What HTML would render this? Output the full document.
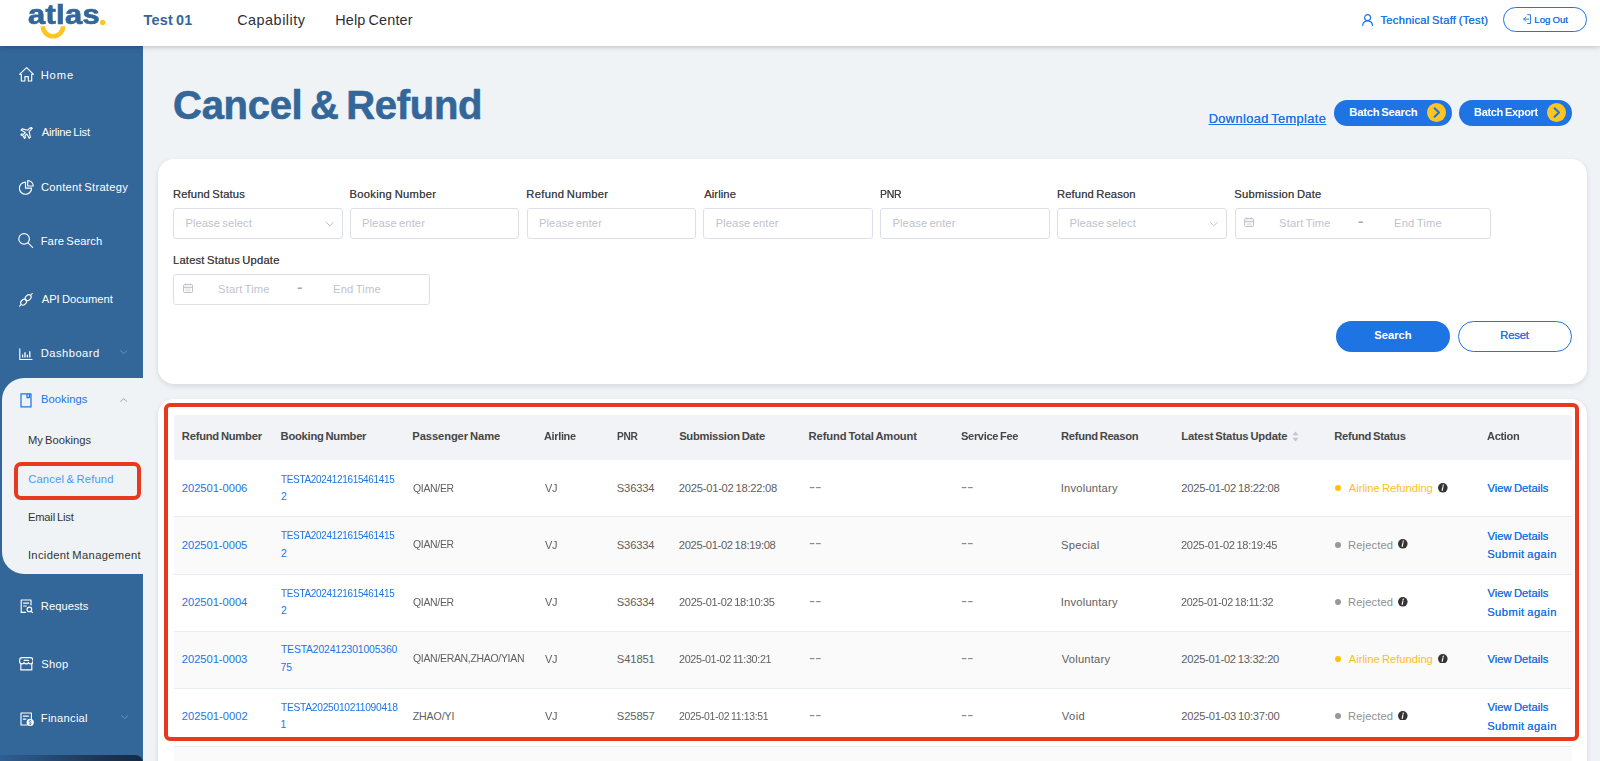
<!DOCTYPE html><html lang="en"><head><meta charset="utf-8"><title>Cancel &amp; Refund</title><style>
*{box-sizing:border-box;margin:0;padding:0}
html,body{width:1600px;height:761px;overflow:hidden;background:#eff3f6;font-family:"Liberation Sans", sans-serif;}
body{position:relative}
.t{position:absolute;white-space:nowrap;display:block;transform-origin:0 50%;word-spacing:-.08em}
a{text-decoration:none}
header,nav,main,section,aside{position:absolute;left:0;top:0}
.inp{position:absolute;background:#fff;border:1px solid #dcdfe8;border-radius:3px}
</style></head><body>
<main>
<h1 class="t" style="left:173.07px;top:76.64px;font-size:40.00px;line-height:56px;color:#336699;font-weight:700;letter-spacing:-0.300px;-webkit-text-stroke:.6px #336699;">Cancel &amp; Refund</h1>
<a class="t" style="left:1208.75px;top:109.56px;font-size:12.80px;line-height:18px;color:#1f74e3;letter-spacing:0.370px;text-decoration:underline;text-underline-offset:1px;text-shadow:0 0 .25px #1f74e3;">Download Template</a>
<div style="position:absolute;left:1333.75px;top:99.75px;width:118.00px;height:26.00px;background:#1f74e3;border-radius:13px;"></div><span class="t" style="left:1349.33px;top:104.37px;font-size:11.20px;line-height:16px;color:#fff;font-weight:700;letter-spacing:-0.212px;">Batch Search</span><svg style="position:absolute;left:1426.90px;top:103.40px;" width="19" height="19" viewBox="0 0 19 19" fill="none"><circle cx="9.5" cy="9.5" r="9.5" fill="#fdc521"/><path d="M7.6 5.2 L12 9.5 L7.6 13.8" stroke="#1f74e3" stroke-width="2" stroke-linecap="round" stroke-linejoin="round"/></svg>
<div style="position:absolute;left:1459.25px;top:99.75px;width:112.75px;height:26.00px;background:#1f74e3;border-radius:13px;"></div><span class="t" style="left:1473.83px;top:104.37px;font-size:11.20px;line-height:16px;color:#fff;font-weight:700;letter-spacing:-0.336px;transform:scaleX(0.9875);">Batch Export</span><svg style="position:absolute;left:1547.00px;top:103.40px;" width="19" height="19" viewBox="0 0 19 19" fill="none"><circle cx="9.5" cy="9.5" r="9.5" fill="#fdc521"/><path d="M7.6 5.2 L12 9.5 L7.6 13.8" stroke="#1f74e3" stroke-width="2" stroke-linecap="round" stroke-linejoin="round"/></svg>
<section>
<div style="position:absolute;left:158.00px;top:159.00px;width:1429.00px;height:224.50px;background:#fff;border-radius:16px;box-shadow:0 2px 5px rgba(40,50,70,.13);"></div>
<label class="t" style="left:173.00px;top:186.02px;font-size:11.20px;line-height:16px;color:#333;letter-spacing:0.144px;color:#404040;text-shadow:0 0 .2px #666;">Refund Status</label>
<label class="t" style="left:349.40px;top:186.02px;font-size:11.20px;line-height:16px;color:#333;letter-spacing:0.328px;color:#404040;text-shadow:0 0 .2px #666;">Booking Number</label>
<label class="t" style="left:526.30px;top:186.02px;font-size:11.20px;line-height:16px;color:#333;letter-spacing:0.308px;color:#404040;text-shadow:0 0 .2px #666;">Refund Number</label>
<label class="t" style="left:704.20px;top:186.02px;font-size:11.20px;line-height:16px;color:#333;letter-spacing:0.106px;color:#404040;text-shadow:0 0 .2px #666;">Airline</label>
<label class="t" style="left:880.33px;top:186.02px;font-size:11.20px;line-height:16px;color:#333;letter-spacing:-0.336px;transform:scaleX(0.9377);color:#404040;text-shadow:0 0 .2px #666;">PNR</label>
<label class="t" style="left:1057.00px;top:186.02px;font-size:11.20px;line-height:16px;color:#333;letter-spacing:0.139px;color:#404040;text-shadow:0 0 .2px #666;">Refund Reason</label>
<label class="t" style="left:1234.33px;top:186.02px;font-size:11.20px;line-height:16px;color:#333;letter-spacing:0.238px;color:#404040;text-shadow:0 0 .2px #666;">Submission Date</label>
<label class="t" style="left:173.00px;top:252.12px;font-size:11.20px;line-height:16px;color:#333;letter-spacing:0.193px;color:#404040;text-shadow:0 0 .2px #666;">Latest Status Update</label>
<div class="inp" style="left:173.00px;top:208.20px;width:169.60px;height:30.5px"></div><span class="t" style="left:185.40px;top:215.22px;font-size:11.20px;line-height:16px;color:#bfc3cc;letter-spacing:0.069px;">Please select</span><svg style="position:absolute;left:325.10px;top:221.20px;" width="9.6" height="6.2" viewBox="0 0 9.6 6.2" fill="none"><path d="M1.2 1.3 L4.8 4.8 L8.4 1.3" stroke="#bcc0c9" stroke-width="1" stroke-linecap="round" stroke-linejoin="round"/></svg>
<div class="inp" style="left:349.50px;top:208.20px;width:169.60px;height:30.5px"></div><span class="t" style="left:362.00px;top:215.22px;font-size:11.20px;line-height:16px;color:#bfc3cc;letter-spacing:0.085px;">Please enter</span>
<div class="inp" style="left:526.50px;top:208.20px;width:169.60px;height:30.5px"></div><span class="t" style="left:539.00px;top:215.22px;font-size:11.20px;line-height:16px;color:#bfc3cc;letter-spacing:0.085px;">Please enter</span>
<div class="inp" style="left:703.20px;top:208.20px;width:169.60px;height:30.5px"></div><span class="t" style="left:715.70px;top:215.22px;font-size:11.20px;line-height:16px;color:#bfc3cc;letter-spacing:0.085px;">Please enter</span>
<div class="inp" style="left:880.00px;top:208.20px;width:169.60px;height:30.5px"></div><span class="t" style="left:892.50px;top:215.22px;font-size:11.20px;line-height:16px;color:#bfc3cc;letter-spacing:0.085px;">Please enter</span>
<div class="inp" style="left:1057.00px;top:208.20px;width:169.60px;height:30.5px"></div><span class="t" style="left:1069.40px;top:215.22px;font-size:11.20px;line-height:16px;color:#bfc3cc;letter-spacing:0.069px;">Please select</span><svg style="position:absolute;left:1209.10px;top:221.20px;" width="9.6" height="6.2" viewBox="0 0 9.6 6.2" fill="none"><path d="M1.2 1.3 L4.8 4.8 L8.4 1.3" stroke="#bcc0c9" stroke-width="1" stroke-linecap="round" stroke-linejoin="round"/></svg>
<div class="inp" style="left:1235.00px;top:208.20px;width:255.80px;height:30.5px"></div><svg style="position:absolute;left:1243.50px;top:216.80px;" width="10.2" height="10.2" viewBox="0 0 10.2 10.2" fill="none"><rect x="0.6" y="1.6" width="9" height="8" rx="1" stroke="#b9bdc7" stroke-width="1"/><path d="M0.6 4.3 H9.6 M2.8 0.4 V2.4 M7.4 0.4 V2.4" stroke="#b9bdc7" stroke-width="1"/><path d="M2.3 6 H7.9 M2.3 7.8 H7.9" stroke="#d5d8df" stroke-width=".9"/></svg><span class="t" style="left:1279.03px;top:214.82px;font-size:11.20px;line-height:16px;color:#bfc3cc;letter-spacing:0.156px;">Start Time</span><span class="t" style="left:1357.63px;top:213.00px;font-size:13.00px;line-height:18px;color:#a4a7b0;font-weight:700;letter-spacing:1.033px;transform:scaleX(1.2818);">-</span><span class="t" style="left:1394.10px;top:214.82px;font-size:11.20px;line-height:16px;color:#bfc3cc;letter-spacing:0.171px;">End Time</span>
<div class="inp" style="left:173.00px;top:274.20px;width:256.80px;height:30.5px"></div><svg style="position:absolute;left:182.50px;top:282.80px;" width="10.2" height="10.2" viewBox="0 0 10.2 10.2" fill="none"><rect x="0.6" y="1.6" width="9" height="8" rx="1" stroke="#b9bdc7" stroke-width="1"/><path d="M0.6 4.3 H9.6 M2.8 0.4 V2.4 M7.4 0.4 V2.4" stroke="#b9bdc7" stroke-width="1"/><path d="M2.3 6 H7.9 M2.3 7.8 H7.9" stroke="#d5d8df" stroke-width=".9"/></svg><span class="t" style="left:218.03px;top:280.82px;font-size:11.20px;line-height:16px;color:#bfc3cc;letter-spacing:0.156px;">Start Time</span><span class="t" style="left:296.63px;top:279.00px;font-size:13.00px;line-height:18px;color:#a4a7b0;font-weight:700;letter-spacing:1.033px;transform:scaleX(1.2818);">-</span><span class="t" style="left:333.10px;top:280.82px;font-size:11.20px;line-height:16px;color:#bfc3cc;letter-spacing:0.171px;">End Time</span>
<div style="position:absolute;left:1335.50px;top:321.00px;width:114.50px;height:30.50px;background:#1f74e3;border-radius:16px;"></div>
<span class="t" style="left:1374.17px;top:326.82px;font-size:11.20px;line-height:16px;color:#fff;font-weight:700;letter-spacing:0.033px;">Search</span>
<div style="position:absolute;left:1457.50px;top:321.00px;width:114.50px;height:30.50px;background:#fff;border:1px solid #1f74e3;border-radius:16px;"></div>
<span class="t" style="left:1500.33px;top:326.82px;font-size:11.20px;line-height:16px;color:#1f74e3;letter-spacing:-0.167px;text-shadow:0 0 .4px #1f74e3;">Reset</span>
</section>
<section>
<div style="position:absolute;left:158.00px;top:399.00px;width:1429.00px;height:380.00px;background:#fff;border-radius:16px;box-shadow:0 2px 5px rgba(40,50,70,.13);"></div>
<div style="position:absolute;left:174.00px;top:414.50px;width:1398.00px;height:45.20px;background:#f1f3f7;border-radius:3px 3px 0 0;"></div>
<span class="t" style="left:181.83px;top:428.02px;font-size:11.20px;line-height:16px;color:#464646;font-weight:700;letter-spacing:-0.236px;">Refund Number</span>
<span class="t" style="left:280.58px;top:428.02px;font-size:11.20px;line-height:16px;color:#464646;font-weight:700;letter-spacing:-0.256px;">Booking Number</span>
<span class="t" style="left:412.33px;top:428.02px;font-size:11.20px;line-height:16px;color:#464646;font-weight:700;letter-spacing:-0.103px;">Passenger Name</span>
<span class="t" style="left:544.17px;top:428.02px;font-size:11.20px;line-height:16px;color:#464646;font-weight:700;letter-spacing:-0.336px;transform:scaleX(0.9771);">Airline</span>
<span class="t" style="left:616.83px;top:428.02px;font-size:11.20px;line-height:16px;color:#464646;font-weight:700;letter-spacing:-0.336px;transform:scaleX(0.9093);">PNR</span>
<span class="t" style="left:679.17px;top:428.02px;font-size:11.20px;line-height:16px;color:#464646;font-weight:700;letter-spacing:-0.274px;">Submission Date</span>
<span class="t" style="left:808.58px;top:428.02px;font-size:11.20px;line-height:16px;color:#464646;font-weight:700;letter-spacing:-0.125px;">Refund Total Amount</span>
<span class="t" style="left:960.92px;top:428.02px;font-size:11.20px;line-height:16px;color:#464646;font-weight:700;letter-spacing:-0.336px;transform:scaleX(0.9903);">Service Fee</span>
<span class="t" style="left:1061.08px;top:428.02px;font-size:11.20px;line-height:16px;color:#464646;font-weight:700;letter-spacing:-0.312px;">Refund Reason</span>
<span class="t" style="left:1181.33px;top:428.02px;font-size:11.20px;line-height:16px;color:#464646;font-weight:700;letter-spacing:-0.175px;">Latest Status Update</span>
<span class="t" style="left:1334.33px;top:428.02px;font-size:11.20px;line-height:16px;color:#464646;font-weight:700;letter-spacing:-0.283px;">Refund Status</span>
<span class="t" style="left:1487.17px;top:428.02px;font-size:11.20px;line-height:16px;color:#464646;font-weight:700;letter-spacing:-0.336px;transform:scaleX(0.9870);">Action</span>
<svg style="position:absolute;left:1292.30px;top:431.00px;" width="7" height="11" viewBox="0 0 7 11" fill="none"><path d="M3.500 0.400 L6.600 4.300 H0.400 Z M3.500 10.600 L6.600 6.700 H0.400 Z" fill="#c2c5cf"/></svg>
<div style="position:absolute;left:174.00px;top:459.50px;width:1398.00px;height:57.70px;background:#fff;"></div>
<a class="t" style="left:181.83px;top:480.12px;font-size:11.20px;line-height:16px;color:#1f74e3;letter-spacing:-0.050px;">202501-0006</a>
<a class="t" style="left:280.92px;top:471.85px;font-size:10.40px;line-height:15px;color:#1f74e3;letter-spacing:-0.312px;transform:scaleX(0.9569);">TESTA2024121615461415</a>
<a class="t" style="left:280.92px;top:489.45px;font-size:10.40px;line-height:15px;color:#1f74e3;">2</a>
<span class="t" style="left:412.67px;top:480.83px;font-size:10.60px;line-height:15px;color:#606060;letter-spacing:-0.318px;transform:scaleX(0.9875);">QIAN/ER</span>
<span class="t" style="left:544.50px;top:480.12px;font-size:11.20px;line-height:16px;color:#606060;letter-spacing:-0.336px;transform:scaleX(0.9794);">VJ</span>
<span class="t" style="left:616.83px;top:480.12px;font-size:11.20px;line-height:16px;color:#606060;letter-spacing:-0.183px;">S36334</span>
<span class="t" style="left:678.83px;top:480.12px;font-size:11.20px;line-height:16px;color:#606060;letter-spacing:-0.250px;">2025-01-02 18:22:08</span>
<span class="t" style="left:808.58px;top:477.05px;font-size:14.00px;line-height:20px;color:#8c8c8c;transform:scaleX(1.3438);">--</span>
<span class="t" style="left:960.58px;top:477.05px;font-size:14.00px;line-height:20px;color:#8c8c8c;transform:scaleX(1.3438);">--</span>
<span class="t" style="left:1060.75px;top:480.12px;font-size:11.20px;line-height:16px;color:#606060;letter-spacing:0.208px;">Involuntary</span>
<span class="t" style="left:1181.33px;top:480.12px;font-size:11.20px;line-height:16px;color:#606060;letter-spacing:-0.250px;">2025-01-02 18:22:08</span>
<div style="position:absolute;left:1335.00px;top:485.15px;width:5.80px;height:5.80px;background:#ffc107;border-radius:50%;"></div>
<span class="t" style="left:1348.75px;top:480.12px;font-size:11.20px;line-height:16px;color:#fbbf24;letter-spacing:-0.014px;">Airline Refunding</span>
<svg style="position:absolute;left:1438.20px;top:482.95px;" width="9.6" height="9.6" viewBox="0 0 9.6 9.6" fill="none"><circle cx="4.8" cy="4.8" r="4.8" fill="#343434"/><path d="M5.3 2 L5.1 2.9 M4.9 4 L4.2 7.4" stroke="#fff" stroke-width="1.15" stroke-linecap="round"/></svg>
<a class="t" style="left:1487.50px;top:480.12px;font-size:11.20px;line-height:16px;color:#1f74e3;letter-spacing:0.045px;text-shadow:0 0 .25px #1f74e3;">View Details</a>
<div style="position:absolute;left:174.00px;top:516.20px;width:1398.00px;height:58.80px;background:#fafafa;border-top:1px solid #e8ecf3;"></div>
<a class="t" style="left:181.83px;top:536.52px;font-size:11.20px;line-height:16px;color:#1f74e3;letter-spacing:-0.050px;">202501-0005</a>
<a class="t" style="left:280.92px;top:528.25px;font-size:10.40px;line-height:15px;color:#1f74e3;letter-spacing:-0.312px;transform:scaleX(0.9569);">TESTA2024121615461415</a>
<a class="t" style="left:280.92px;top:545.85px;font-size:10.40px;line-height:15px;color:#1f74e3;">2</a>
<span class="t" style="left:412.67px;top:537.23px;font-size:10.60px;line-height:15px;color:#606060;letter-spacing:-0.318px;transform:scaleX(0.9875);">QIAN/ER</span>
<span class="t" style="left:544.50px;top:536.52px;font-size:11.20px;line-height:16px;color:#606060;letter-spacing:-0.336px;transform:scaleX(0.9794);">VJ</span>
<span class="t" style="left:616.83px;top:536.52px;font-size:11.20px;line-height:16px;color:#606060;letter-spacing:-0.183px;">S36334</span>
<span class="t" style="left:678.83px;top:536.52px;font-size:11.20px;line-height:16px;color:#606060;letter-spacing:-0.333px;">2025-01-02 18:19:08</span>
<span class="t" style="left:808.58px;top:533.45px;font-size:14.00px;line-height:20px;color:#8c8c8c;transform:scaleX(1.3438);">--</span>
<span class="t" style="left:960.58px;top:533.45px;font-size:14.00px;line-height:20px;color:#8c8c8c;transform:scaleX(1.3438);">--</span>
<span class="t" style="left:1061.08px;top:536.52px;font-size:11.20px;line-height:16px;color:#606060;letter-spacing:0.236px;">Special</span>
<span class="t" style="left:1181.33px;top:536.52px;font-size:11.20px;line-height:16px;color:#606060;letter-spacing:-0.336px;transform:scaleX(0.9953);">2025-01-02 18:19:45</span>
<div style="position:absolute;left:1335.00px;top:541.55px;width:6.00px;height:6.00px;background:#989898;border-radius:50%;"></div>
<span class="t" style="left:1348.00px;top:536.52px;font-size:11.20px;line-height:16px;color:#8f8f8f;letter-spacing:0.124px;">Rejected</span>
<svg style="position:absolute;left:1398.00px;top:539.35px;" width="9.6" height="9.6" viewBox="0 0 9.6 9.6" fill="none"><circle cx="4.8" cy="4.8" r="4.8" fill="#343434"/><path d="M5.3 2 L5.1 2.9 M4.9 4 L4.2 7.4" stroke="#fff" stroke-width="1.15" stroke-linecap="round"/></svg>
<a class="t" style="left:1487.50px;top:527.72px;font-size:11.20px;line-height:16px;color:#1f74e3;letter-spacing:0.045px;text-shadow:0 0 .25px #1f74e3;">View Details</a>
<a class="t" style="left:1487.17px;top:546.12px;font-size:11.20px;line-height:16px;color:#1f74e3;letter-spacing:0.442px;text-shadow:0 0 .25px #1f74e3;">Submit again</a>
<div style="position:absolute;left:174.00px;top:574.00px;width:1398.00px;height:58.00px;background:#fff;border-top:1px solid #e8ecf3;"></div>
<a class="t" style="left:181.83px;top:594.12px;font-size:11.20px;line-height:16px;color:#1f74e3;letter-spacing:-0.050px;">202501-0004</a>
<a class="t" style="left:280.92px;top:585.85px;font-size:10.40px;line-height:15px;color:#1f74e3;letter-spacing:-0.312px;transform:scaleX(0.9569);">TESTA2024121615461415</a>
<a class="t" style="left:280.92px;top:603.45px;font-size:10.40px;line-height:15px;color:#1f74e3;">2</a>
<span class="t" style="left:412.67px;top:594.83px;font-size:10.60px;line-height:15px;color:#606060;letter-spacing:-0.318px;transform:scaleX(0.9875);">QIAN/ER</span>
<span class="t" style="left:544.50px;top:594.12px;font-size:11.20px;line-height:16px;color:#606060;letter-spacing:-0.336px;transform:scaleX(0.9794);">VJ</span>
<span class="t" style="left:616.83px;top:594.12px;font-size:11.20px;line-height:16px;color:#606060;letter-spacing:-0.183px;">S36334</span>
<span class="t" style="left:678.83px;top:594.12px;font-size:11.20px;line-height:16px;color:#606060;letter-spacing:-0.336px;transform:scaleX(0.9901);">2025-01-02 18:10:35</span>
<span class="t" style="left:808.58px;top:591.05px;font-size:14.00px;line-height:20px;color:#8c8c8c;transform:scaleX(1.3438);">--</span>
<span class="t" style="left:960.58px;top:591.05px;font-size:14.00px;line-height:20px;color:#8c8c8c;transform:scaleX(1.3438);">--</span>
<span class="t" style="left:1060.75px;top:594.12px;font-size:11.20px;line-height:16px;color:#606060;letter-spacing:0.208px;">Involuntary</span>
<span class="t" style="left:1181.33px;top:594.12px;font-size:11.20px;line-height:16px;color:#606060;letter-spacing:-0.336px;transform:scaleX(0.9636);">2025-01-02 18:11:32</span>
<div style="position:absolute;left:1335.00px;top:599.15px;width:6.00px;height:6.00px;background:#989898;border-radius:50%;"></div>
<span class="t" style="left:1348.00px;top:594.12px;font-size:11.20px;line-height:16px;color:#8f8f8f;letter-spacing:0.124px;">Rejected</span>
<svg style="position:absolute;left:1398.00px;top:596.95px;" width="9.6" height="9.6" viewBox="0 0 9.6 9.6" fill="none"><circle cx="4.8" cy="4.8" r="4.8" fill="#343434"/><path d="M5.3 2 L5.1 2.9 M4.9 4 L4.2 7.4" stroke="#fff" stroke-width="1.15" stroke-linecap="round"/></svg>
<a class="t" style="left:1487.50px;top:585.32px;font-size:11.20px;line-height:16px;color:#1f74e3;letter-spacing:0.045px;text-shadow:0 0 .25px #1f74e3;">View Details</a>
<a class="t" style="left:1487.17px;top:603.72px;font-size:11.20px;line-height:16px;color:#1f74e3;letter-spacing:0.442px;text-shadow:0 0 .25px #1f74e3;">Submit again</a>
<div style="position:absolute;left:174.00px;top:631.00px;width:1398.00px;height:58.30px;background:#fafafa;border-top:1px solid #e8ecf3;"></div>
<a class="t" style="left:181.83px;top:650.72px;font-size:11.20px;line-height:16px;color:#1f74e3;letter-spacing:-0.050px;">202501-0003</a>
<a class="t" style="left:280.92px;top:642.45px;font-size:10.40px;line-height:15px;color:#1f74e3;letter-spacing:-0.154px;">TESTA202412301005360</a>
<a class="t" style="left:280.58px;top:660.05px;font-size:10.40px;line-height:15px;color:#1f74e3;">75</a>
<span class="t" style="left:412.67px;top:651.43px;font-size:10.60px;line-height:15px;color:#606060;letter-spacing:-0.318px;transform:scaleX(0.9901);">QIAN/ERAN,ZHAO/YIAN</span>
<span class="t" style="left:544.50px;top:650.72px;font-size:11.20px;line-height:16px;color:#606060;letter-spacing:-0.336px;transform:scaleX(0.9794);">VJ</span>
<span class="t" style="left:616.83px;top:650.72px;font-size:11.20px;line-height:16px;color:#606060;letter-spacing:-0.117px;">S41851</span>
<span class="t" style="left:678.83px;top:650.72px;font-size:11.20px;line-height:16px;color:#606060;letter-spacing:-0.336px;transform:scaleX(0.9636);">2025-01-02 11:30:21</span>
<span class="t" style="left:808.58px;top:647.65px;font-size:14.00px;line-height:20px;color:#8c8c8c;transform:scaleX(1.3438);">--</span>
<span class="t" style="left:960.58px;top:647.65px;font-size:14.00px;line-height:20px;color:#8c8c8c;transform:scaleX(1.3438);">--</span>
<span class="t" style="left:1061.75px;top:650.72px;font-size:11.20px;line-height:16px;color:#606060;letter-spacing:0.198px;">Voluntary</span>
<span class="t" style="left:1181.33px;top:650.72px;font-size:11.20px;line-height:16px;color:#606060;letter-spacing:-0.278px;">2025-01-02 13:32:20</span>
<div style="position:absolute;left:1335.00px;top:655.75px;width:5.80px;height:5.80px;background:#ffc107;border-radius:50%;"></div>
<span class="t" style="left:1348.75px;top:650.72px;font-size:11.20px;line-height:16px;color:#fbbf24;letter-spacing:-0.014px;">Airline Refunding</span>
<svg style="position:absolute;left:1438.20px;top:653.55px;" width="9.6" height="9.6" viewBox="0 0 9.6 9.6" fill="none"><circle cx="4.8" cy="4.8" r="4.8" fill="#343434"/><path d="M5.3 2 L5.1 2.9 M4.9 4 L4.2 7.4" stroke="#fff" stroke-width="1.15" stroke-linecap="round"/></svg>
<a class="t" style="left:1487.50px;top:650.72px;font-size:11.20px;line-height:16px;color:#1f74e3;letter-spacing:0.045px;text-shadow:0 0 .25px #1f74e3;">View Details</a>
<div style="position:absolute;left:174.00px;top:688.30px;width:1398.00px;height:58.70px;background:#fff;border-top:1px solid #e8ecf3;"></div>
<a class="t" style="left:181.83px;top:707.92px;font-size:11.20px;line-height:16px;color:#1f74e3;letter-spacing:-0.017px;">202501-0002</a>
<a class="t" style="left:280.92px;top:699.65px;font-size:10.40px;line-height:15px;color:#1f74e3;letter-spacing:-0.312px;transform:scaleX(0.9900);">TESTA2025010211090418</a>
<a class="t" style="left:280.58px;top:717.25px;font-size:10.40px;line-height:15px;color:#1f74e3;">1</a>
<span class="t" style="left:412.67px;top:708.63px;font-size:10.60px;line-height:15px;color:#606060;letter-spacing:-0.083px;">ZHAO/YI</span>
<span class="t" style="left:544.50px;top:707.92px;font-size:11.20px;line-height:16px;color:#606060;letter-spacing:-0.336px;transform:scaleX(0.9794);">VJ</span>
<span class="t" style="left:616.83px;top:707.92px;font-size:11.20px;line-height:16px;color:#606060;letter-spacing:-0.117px;">S25857</span>
<span class="t" style="left:679.17px;top:707.92px;font-size:11.20px;line-height:16px;color:#606060;letter-spacing:-0.336px;transform:scaleX(0.9320);">2025-01-02 11:13:51</span>
<span class="t" style="left:808.58px;top:704.85px;font-size:14.00px;line-height:20px;color:#8c8c8c;transform:scaleX(1.3438);">--</span>
<span class="t" style="left:960.58px;top:704.85px;font-size:14.00px;line-height:20px;color:#8c8c8c;transform:scaleX(1.3438);">--</span>
<span class="t" style="left:1061.75px;top:707.92px;font-size:11.20px;line-height:16px;color:#606060;letter-spacing:0.417px;">Void</span>
<span class="t" style="left:1181.33px;top:707.92px;font-size:11.20px;line-height:16px;color:#606060;letter-spacing:-0.250px;">2025-01-03 10:37:00</span>
<div style="position:absolute;left:1335.00px;top:712.95px;width:6.00px;height:6.00px;background:#989898;border-radius:50%;"></div>
<span class="t" style="left:1348.00px;top:707.92px;font-size:11.20px;line-height:16px;color:#8f8f8f;letter-spacing:0.124px;">Rejected</span>
<svg style="position:absolute;left:1398.00px;top:710.75px;" width="9.6" height="9.6" viewBox="0 0 9.6 9.6" fill="none"><circle cx="4.8" cy="4.8" r="4.8" fill="#343434"/><path d="M5.3 2 L5.1 2.9 M4.9 4 L4.2 7.4" stroke="#fff" stroke-width="1.15" stroke-linecap="round"/></svg>
<a class="t" style="left:1487.50px;top:699.12px;font-size:11.20px;line-height:16px;color:#1f74e3;letter-spacing:0.045px;text-shadow:0 0 .25px #1f74e3;">View Details</a>
<a class="t" style="left:1487.17px;top:717.52px;font-size:11.20px;line-height:16px;color:#1f74e3;letter-spacing:0.442px;text-shadow:0 0 .25px #1f74e3;">Submit again</a>
<div style="position:absolute;left:174.00px;top:746.00px;width:1398.00px;height:58.30px;background:#fafafa;border-top:1px solid #e8ecf3;"></div>
<a class="t" style="left:181.83px;top:767.42px;font-size:11.20px;line-height:16px;color:#1f74e3;letter-spacing:-0.050px;">202501-0001</a>
<a class="t" style="left:280.92px;top:759.15px;font-size:10.40px;line-height:15px;color:#1f74e3;letter-spacing:-0.312px;transform:scaleX(0.9569);">TESTA2024121615461415</a>
<a class="t" style="left:280.92px;top:776.75px;font-size:10.40px;line-height:15px;color:#1f74e3;">2</a>
<span class="t" style="left:412.67px;top:768.13px;font-size:10.60px;line-height:15px;color:#606060;letter-spacing:-0.318px;transform:scaleX(0.9875);">QIAN/ER</span>
<span class="t" style="left:544.50px;top:767.42px;font-size:11.20px;line-height:16px;color:#606060;letter-spacing:-0.336px;transform:scaleX(0.9794);">VJ</span>
<span class="t" style="left:616.83px;top:767.42px;font-size:11.20px;line-height:16px;color:#606060;letter-spacing:-0.183px;">S36334</span>
<span class="t" style="left:678.83px;top:767.42px;font-size:11.20px;line-height:16px;color:#606060;letter-spacing:-0.250px;">2025-01-02 10:22:08</span>
<span class="t" style="left:808.58px;top:764.35px;font-size:14.00px;line-height:20px;color:#8c8c8c;transform:scaleX(1.3438);">--</span>
<span class="t" style="left:960.58px;top:764.35px;font-size:14.00px;line-height:20px;color:#8c8c8c;transform:scaleX(1.3438);">--</span>
<span class="t" style="left:1060.75px;top:767.42px;font-size:11.20px;line-height:16px;color:#606060;letter-spacing:0.208px;">Involuntary</span>
<span class="t" style="left:1181.33px;top:767.42px;font-size:11.20px;line-height:16px;color:#606060;letter-spacing:-0.250px;">2025-01-02 10:22:08</span>
<div style="position:absolute;left:1335.00px;top:772.45px;width:6.00px;height:6.00px;background:#989898;border-radius:50%;"></div>
<span class="t" style="left:1348.00px;top:767.42px;font-size:11.20px;line-height:16px;color:#8f8f8f;letter-spacing:0.124px;">Rejected</span>
<svg style="position:absolute;left:1398.00px;top:770.25px;" width="9.6" height="9.6" viewBox="0 0 9.6 9.6" fill="none"><circle cx="4.8" cy="4.8" r="4.8" fill="#343434"/><path d="M5.3 2 L5.1 2.9 M4.9 4 L4.2 7.4" stroke="#fff" stroke-width="1.15" stroke-linecap="round"/></svg>
<a class="t" style="left:1487.50px;top:758.62px;font-size:11.20px;line-height:16px;color:#1f74e3;letter-spacing:0.045px;text-shadow:0 0 .25px #1f74e3;">View Details</a>
<a class="t" style="left:1487.17px;top:777.02px;font-size:11.20px;line-height:16px;color:#1f74e3;letter-spacing:0.442px;text-shadow:0 0 .25px #1f74e3;">Submit again</a>
<div style="position:absolute;left:164.00px;top:403.00px;width:1415.30px;height:337.70px;border:4px solid #e8391f;border-radius:6px;"></div>
</section>
</main>
<nav>
<div style="position:absolute;left:0.00px;top:46.00px;width:143.00px;height:715.00px;background:#336699;"></div>
<div style="position:absolute;left:2.00px;top:378.00px;width:141.00px;height:195.50px;background:#eff3f6;border-radius:22px 0 0 22px;"></div>
<div style="position:absolute;left:0.00px;top:755.00px;width:143.00px;height:10.00px;background:linear-gradient(90deg,#2f5f92 0%,#1b3553 70%,#152a44 100%);border-radius:0 8px 0 0;"></div>
<svg style="position:absolute;left:18.60px;top:67.20px;" width="15" height="14.8" viewBox="0 0 15 14.8" fill="none"><path d="M7.6 0.700 L0.500 7.300 H2.300 V14 H5.900 V9.600 H9.300 V14 H12.700 V7.300 H14.500 Z" stroke="#fff" stroke-width="1.15" stroke-linecap="round" stroke-linejoin="round"/></svg>
<a class="t" style="left:40.70px;top:66.92px;font-size:11.20px;line-height:16px;color:#fff;letter-spacing:0.856px;">Home</a>
<svg style="position:absolute;left:19.60px;top:126.60px;" width="13.4" height="13" viewBox="0 0 13.4 13" fill="none"><path d="M12.3 1.4 c-.9-.9-2.3-.6-3.1.2 L7.6 3.2 2.2 1.9 1 3.1 5.3 5.5 3.6 7.3 1.6 7 .8 7.8 3.2 9.1 4.5 11.5 5.3 10.700 5 8.700 6.800 7 9.200 11.300 10.400 10.100 9.100 4.700 10.700 3.100 c.8-.8 1.100-2.200 .2-3.100 Z" stroke="#fff" stroke-width="1.15" stroke-linecap="round" stroke-linejoin="round"/></svg>
<a class="t" style="left:41.70px;top:124.42px;font-size:11.20px;line-height:16px;color:#fff;letter-spacing:-0.215px;">Airline List</a>
<svg style="position:absolute;left:18.60px;top:180.20px;" width="15.2" height="15" viewBox="0 0 15.2 15" fill="none"><path d="M6.500 2.100 A6.100 6.100 0 1 0 12.600 8.200 H6.500 Z" stroke="#fff" stroke-width="1.15" stroke-linecap="round" stroke-linejoin="round"/><path d="M8.700 0.600 V6 H14.300 A5.600 5.600 0 0 0 8.700 0.600 Z" stroke="#fff" stroke-width="1.15" stroke-linecap="round" stroke-linejoin="round"/></svg>
<a class="t" style="left:41.03px;top:178.62px;font-size:11.20px;line-height:16px;color:#fff;letter-spacing:0.244px;">Content Strategy</a>
<svg style="position:absolute;left:18.40px;top:233.40px;" width="15.4" height="15.4" viewBox="0 0 15.4 15.4" fill="none"><circle cx="6.100" cy="5.900" r="5.300" stroke="#fff" stroke-width="1.15" stroke-linecap="round" stroke-linejoin="round"/><path d="M10 9.800 L14.600 14.300" stroke="#fff" stroke-width="1.15" stroke-linecap="round" stroke-linejoin="round"/></svg>
<a class="t" style="left:40.70px;top:232.82px;font-size:11.20px;line-height:16px;color:#fff;letter-spacing:0.090px;">Fare Search</a>
<svg style="position:absolute;left:19.20px;top:292.80px;" width="13.8" height="13.8" viewBox="0 0 13.8 13.8" fill="none"><path d="M0.600 13.200 L2.100 11.700 M11.700 2.100 L13.200 0.600" stroke="#fff" stroke-width="1.15" stroke-linecap="round" stroke-linejoin="round"/><rect x="1.500" y="6.800" width="6.200" height="4.800" rx="2.400" transform="rotate(-45 4.600 9.200)" stroke="#fff" stroke-width="1.15" stroke-linecap="round" stroke-linejoin="round"/><rect x="6.100" y="2.200" width="6.200" height="4.800" rx="2.400" transform="rotate(-45 9.200 4.600)" stroke="#fff" stroke-width="1.15" stroke-linecap="round" stroke-linejoin="round"/></svg>
<a class="t" style="left:41.70px;top:291.32px;font-size:11.20px;line-height:16px;color:#fff;letter-spacing:-0.003px;">API Document</a>
<svg style="position:absolute;left:19.20px;top:347.60px;" width="13.8" height="12.4" viewBox="0 0 13.8 12.4" fill="none"><path d="M0.8 0.800 V11.600 H13" stroke="#fff" stroke-width="1.15" stroke-linecap="round" stroke-linejoin="round"/><path d="M3.600 9.400 V6.400 M6 9.400 V4.200 M8.400 9.400 V6.800 M10.800 9.400 V3.200" stroke="#fff" stroke-width="1.300"/></svg>
<a class="t" style="left:40.70px;top:344.72px;font-size:11.20px;line-height:16px;color:#fff;letter-spacing:0.475px;">Dashboard</a>
<svg style="position:absolute;left:120.20px;top:350.40px;" width="7.6" height="4.2" viewBox="0 0 7.6 4.2" fill="none"><path d="M0.600 0.600 L3.800 3.600 L7 0.600" stroke="#6c93bb" stroke-width="1" stroke-linecap="round" stroke-linejoin="round"/></svg>
<svg style="position:absolute;left:19.80px;top:393.00px;" width="12" height="14.8" viewBox="0 0 12 14.8" fill="none"><path d="M1 0.800 H11 V14 H1 Z M7 0.800 V4.600 H9.400 V0.800" stroke="#1f74e3" stroke-width="1.250" stroke-linejoin="round"/></svg>
<a class="t" style="left:40.90px;top:391.12px;font-size:11.20px;line-height:16px;color:#1f74e3;letter-spacing:0.076px;">Bookings</a>
<svg style="position:absolute;left:119.60px;top:397.60px;" width="7.6" height="4.2" viewBox="0 0 7.6 4.2" fill="none"><path d="M0.600 3.600 L3.800 0.600 L7 3.600" stroke="#9aa3ad" stroke-width="1" stroke-linecap="round" stroke-linejoin="round"/></svg>
<a class="t" style="left:27.90px;top:432.22px;font-size:11.20px;line-height:16px;color:#333;letter-spacing:0.010px;">My Bookings</a>
<a class="t" style="left:28.23px;top:470.62px;font-size:11.20px;line-height:16px;color:#4a98fb;letter-spacing:0.176px;">Cancel &amp; Refund</a>
<a class="t" style="left:27.90px;top:508.92px;font-size:11.20px;line-height:16px;color:#333;letter-spacing:-0.185px;">Email List</a>
<a class="t" style="left:27.90px;top:546.62px;font-size:11.20px;line-height:16px;color:#333;letter-spacing:0.341px;">Incident Management</a>
<div style="position:absolute;left:14.20px;top:462.00px;width:126.60px;height:37.60px;border:4px solid #e8391f;border-radius:7px;"></div>
<svg style="position:absolute;left:19.60px;top:599.30px;" width="13.8" height="14.6" viewBox="0 0 13.8 14.6" fill="none"><path d="M11 6 V1 H1.200 V13.400 H5.600 M3.600 4.200 H8.600 M3.600 7 H6.400" stroke="#fff" stroke-width="1.15" stroke-linecap="round" stroke-linejoin="round"/><circle cx="9.400" cy="10.400" r="2.300" stroke="#fff" stroke-width="1.15" stroke-linecap="round" stroke-linejoin="round"/><path d="M11.100 12.100 L12.600 13.600" stroke="#fff" stroke-width="1.15" stroke-linecap="round" stroke-linejoin="round"/></svg>
<a class="t" style="left:40.80px;top:597.72px;font-size:11.20px;line-height:16px;color:#fff;letter-spacing:0.043px;">Requests</a>
<svg style="position:absolute;left:18.80px;top:657.00px;" width="14.6" height="13.6" viewBox="0 0 14.6 13.6" fill="none"><path d="M3.200 0.700 H11.400 C13 0.700 14 2 14 3.600 V4.600 C14 6 12.900 6.900 11.700 6.900 C10.600 6.900 9.900 6.300 9.500 5.600 C9.100 6.300 8.300 6.900 7.300 6.900 C6.300 6.900 5.500 6.300 5.100 5.600 C4.700 6.300 4 6.900 2.900 6.900 C1.700 6.900 0.600 6 0.600 4.600 V3.600 C0.600 2 1.600 0.700 3.200 0.700 Z" stroke="#fff" stroke-width="1.15" stroke-linecap="round" stroke-linejoin="round"/><path d="M1.800 7 V12.900 H12.800 V7 M5.200 3.400 H9.400" stroke="#fff" stroke-width="1.15" stroke-linecap="round" stroke-linejoin="round"/></svg>
<a class="t" style="left:41.13px;top:656.22px;font-size:11.20px;line-height:16px;color:#fff;letter-spacing:0.300px;">Shop</a>
<svg style="position:absolute;left:19.50px;top:711.60px;" width="14.6" height="14.4" viewBox="0 0 14.6 14.4" fill="none"><path d="M7 13 H1 V1 H11.400 V6.400 M3.400 4.200 H8.400 M3.400 7.200 H5.800" stroke="#fff" stroke-width="1.15" stroke-linecap="round" stroke-linejoin="round"/><circle cx="10.200" cy="10.400" r="3.600" fill="#fff"/><path d="M11.100 9.100 C10.600 8.500 9.200 8.700 9.300 9.600 C9.400 10.600 11.200 10.200 11.200 11.300 C11.200 12.200 9.700 12.300 9.200 11.700 M10.200 8.100 V8.700 M10.200 12.200 V12.800" stroke="#336699" stroke-width=".8" stroke-linecap="round"/></svg>
<a class="t" style="left:40.80px;top:710.12px;font-size:11.20px;line-height:16px;color:#fff;letter-spacing:0.250px;">Financial</a>
<svg style="position:absolute;left:120.70px;top:714.70px;" width="7.6" height="4.2" viewBox="0 0 7.6 4.2" fill="none"><path d="M0.600 0.600 L3.800 3.600 L7 0.600" stroke="#6c93bb" stroke-width="1" stroke-linecap="round" stroke-linejoin="round"/></svg>
</nav>
<header>
<div style="position:absolute;left:0.00px;top:0.00px;width:1600.00px;height:46.00px;background:#fff;box-shadow:0 1px 5px rgba(0,0,0,.22);"></div>
<span class="t" style="left:28.37px;top:-6.28px;font-size:28.50px;line-height:40px;color:#336699;font-weight:700;letter-spacing:0.285px;transform:scaleX(1.0848);-webkit-text-stroke:.7px #336699;">atlas</span>
<svg style="position:absolute;left:38.00px;top:18.00px;" width="70" height="24" viewBox="0 0 70 24" fill="none"><circle cx="64.6" cy="4.400" r="2.700" fill="#fdc521"/><path d="M4.900 8.200 A10.100 10.100 0 0 0 25.100 8.200" stroke="#fdc521" stroke-width="4.600"/></svg>
<span class="t" style="left:143.50px;top:10.01px;font-size:14.40px;line-height:20px;color:#336699;font-weight:700;letter-spacing:0.233px;">Test 01</span>
<a class="t" style="left:237.13px;top:10.01px;font-size:14.40px;line-height:20px;color:#2e2e38;letter-spacing:0.519px;">Capability</a>
<a class="t" style="left:335.30px;top:10.01px;font-size:14.40px;line-height:20px;color:#2e2e38;letter-spacing:0.157px;">Help Center</a>
<svg style="position:absolute;left:1362.40px;top:14.20px;" width="11.2" height="11.8" viewBox="0 0 11.2 11.8" fill="none"><circle cx="5.600" cy="3.700" r="3" stroke="#1f74e3" stroke-width="1.200"/><path d="M0.700 11.400 C1 8.200 3 6.900 5.600 6.900 C8.200 6.900 10.200 8.200 10.500 11.400" stroke="#1f74e3" stroke-width="1.200" stroke-linecap="round"/></svg>
<span class="t" style="left:1380.50px;top:11.87px;font-size:11.20px;line-height:16px;color:#1f74e3;letter-spacing:0.270px;text-shadow:0 0 .2px #1f74e3;">Technical Staff (Test)</span>
<div style="position:absolute;left:1503.00px;top:7.00px;width:84.00px;height:25.00px;border:1px solid #1f74e3;border-radius:13px;background:#fff;"></div>
<svg style="position:absolute;left:1523.40px;top:14.40px;" width="8.2" height="10.2" viewBox="0 0 8.2 10.2" fill="none"><path d="M4.600 0.700 H7.500 V9.500 H4.600 M5.600 5.100 H0.800 M2.800 3 L0.700 5.100 L2.800 7.200" stroke="#1f74e3" stroke-width=".95" stroke-linejoin="round" stroke-linecap="round"/></svg>
<span class="t" style="left:1534.33px;top:13.47px;font-size:9.60px;line-height:13px;color:#1f74e3;letter-spacing:0.056px;text-shadow:0 0 .3px #1f74e3;">Log Out</span>
</header>
</body></html>
